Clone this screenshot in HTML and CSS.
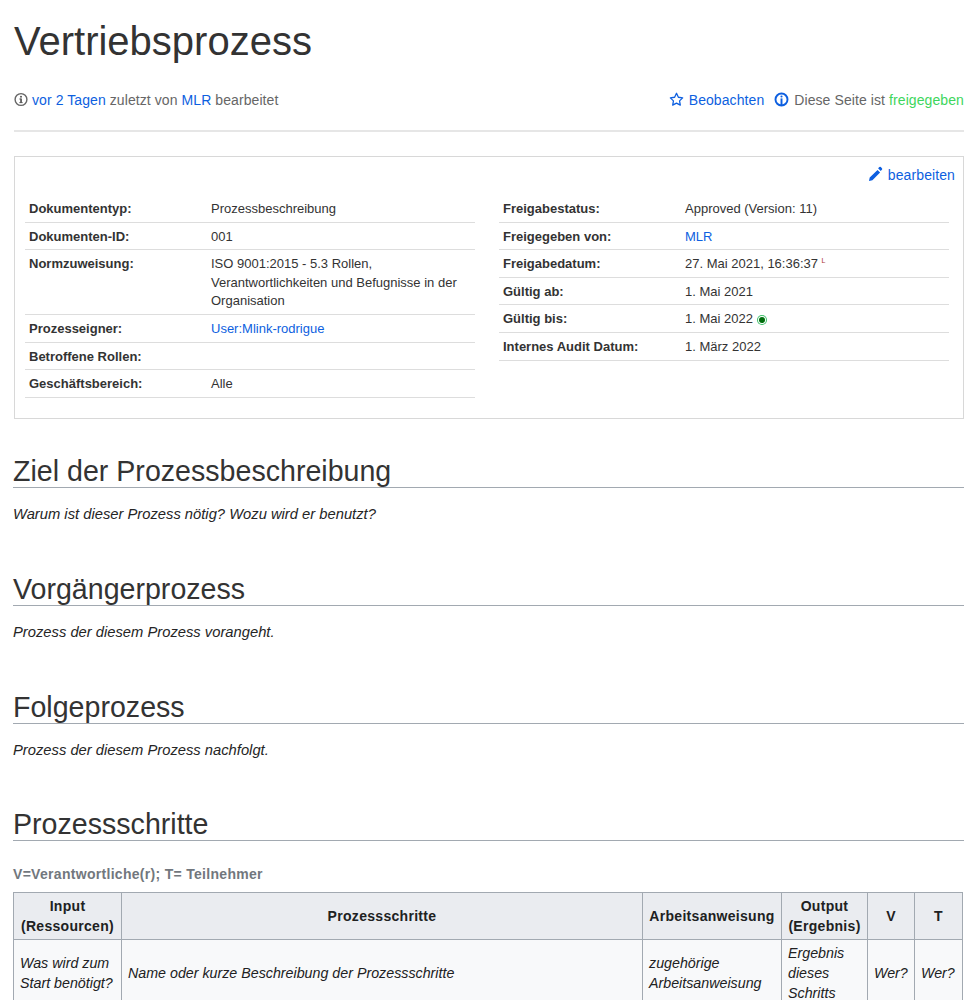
FILE: index.html
```html
<!DOCTYPE html>
<html lang="de">
<head>
<meta charset="utf-8">
<title>Vertriebsprozess</title>
<link rel="stylesheet" href="styles.css">
</head>
<body>
<main class="page">
  <h1 class="title">Vertriebsprozess</h1>
  <div class="meta">
    <div class="meta-left">
      <svg class="ico ico-info" viewBox="0 0 14 14"><circle cx="7" cy="7" r="5.9" fill="none" stroke="#666" stroke-width="1.4"/><rect x="6.2" y="6" width="1.7" height="4" fill="#555"/><rect x="5.4" y="9.6" width="3.2" height="1" fill="#555"/><rect x="5.4" y="6" width="1.5" height="1" fill="#555"/><circle cx="7" cy="4.2" r="1" fill="#555"/></svg>
      <a href="#">vor 2 Tagen</a> zuletzt von <a href="#">MLR</a> bearbeitet
    </div>
    <div class="meta-right">
      <a href="#" class="watch"><svg class="ico ico-wide" viewBox="0 0 14 14"><path d="M7 1.2l1.75 3.7 4 .55-2.9 2.8.7 4L7 10.35 3.45 12.25l.7-4-2.9-2.8 4-.55z" fill="none" stroke="#0d5fe0" stroke-width="1.2" stroke-linejoin="round"/></svg> Beobachten</a>
      <span class="status"><svg class="ico ico-wide" viewBox="0 0 14 14"><circle cx="7" cy="7" r="5.6" fill="none" stroke="#0d5fe0" stroke-width="1.8"/><rect x="6.1" y="6" width="1.8" height="7" fill="#0d5fe0"/><circle cx="7" cy="4.2" r="1" fill="#0d5fe0"/></svg> Diese Seite ist <span class="ok">freigegeben</span></span>
    </div>
  </div>
  <hr class="rule">
  <section class="infobox">
    <div class="edit"><a href="#"><svg class="pencil" viewBox="0 0 14 14"><path d="M10.6 1a1 1 0 0 1 1.4 0l1 1a1 1 0 0 1 0 1.4l-1.2 1.2-2.4-2.4zM8.9 3.7l1.4 1.4 1.0 1-7.2 7.1-3.2.7.7-3.2z" fill="#0d5fe0"/></svg> bearbeiten</a></div>
    <div class="columns">
      <table class="facts">
        <tr><th>Dokumententyp:</th><td>Prozessbeschreibung</td></tr>
        <tr><th>Dokumenten-ID:</th><td>001</td></tr>
        <tr><th>Normzuweisung:</th><td>ISO 9001:2015 - 5.3 Rollen, Verantwortlichkeiten und Befugnisse in der Organisation</td></tr>
        <tr><th>Prozesseigner:</th><td><a href="#">User:Mlink-rodrigue</a></td></tr>
        <tr><th>Betroffene Rollen:</th><td></td></tr>
        <tr><th>Geschäftsbereich:</th><td>Alle</td></tr>
      </table>
      <table class="facts">
        <tr><th>Freigabestatus:</th><td>Approved (Version: 11)</td></tr>
        <tr><th>Freigegeben von:</th><td><a href="#">MLR</a></td></tr>
        <tr><th>Freigabedatum:</th><td>27. Mai 2021, 16:36:37 <sup class="mark">L</sup></td></tr>
        <tr><th>Gültig ab:</th><td>1. Mai 2021</td></tr>
        <tr><th>Gültig bis:</th><td>1. Mai 2022 <span class="dot"></span></td></tr>
        <tr><th>Internes Audit Datum:</th><td>1. März 2022</td></tr>
      </table>
    </div>
  </section>
  <h2 class="heading">Ziel der Prozessbeschreibung</h2>
  <p class="hint">Warum ist dieser Prozess nötig? Wozu wird er benutzt?</p>
  <h2 class="heading">Vorgängerprozess</h2>
  <p class="hint">Prozess der diesem Prozess vorangeht.</p>
  <h2 class="heading">Folgeprozess</h2>
  <p class="hint">Prozess der diesem Prozess nachfolgt.</p>
  <h2 class="heading">Prozessschritte</h2>
  <p class="legend">V=Verantwortliche(r); T= Teilnehmer</p>
  <table class="steps">
    <colgroup><col class="c1"><col><col class="c3"><col class="c4"><col class="c5"><col class="c6"></colgroup>
    <tr><th>Input<br>(Ressourcen)</th><th>Prozessschritte</th><th>Arbeitsanweisung</th><th>Output<br>(Ergebnis)</th><th>V</th><th>T</th></tr>
    <tr><td>Was wird zum Start benötigt?</td><td>Name oder kurze Beschreibung der Prozessschritte</td><td>zugehörige Arbeitsanweisung</td><td>Ergebnis dieses Schritts</td><td>Wer?</td><td>Wer?</td></tr>
  </table>
</main>
</body>
</html>
```
FILE: styles.css
```css
html, body { margin: 0; padding: 0; background: #fff; }
html { height: 1000px; overflow: hidden; }
body { font-family: "Liberation Sans", Arial, sans-serif; font-size: 14px; color: #252525; height: 1000px; overflow: hidden; }
a { color: #0d5fe0; text-decoration: none; }
.page { padding: 0 14px 0 13px; }
.title { margin: 0 0 0 1px; padding-top: 16px; font-size: 40px; line-height: 50px; font-weight: 400; color: #333; }
.meta { display: flex; justify-content: space-between; margin: 0 0 0 1px; padding-top: 26px; height: 22px; line-height: 16px; color: #666; letter-spacing: .08px; }
.meta-right { display: flex; gap: 10px; }
.status { letter-spacing: .09px; }
.ok { color: #3dd65c; }
.ico { width: 15px; height: 15px; vertical-align: -2px; }
.ico-info { width: 14px; }
.ico-wide { margin-right: 1px; }
.rule { margin: 16px 0 0 1px; border: 0; height: 2px; background: #e6e6e6; }
.infobox { box-sizing: border-box; margin: 24px 0 0 1px; border: 1px solid #d8d8d8; height: 263px; padding: 9px 14px 0 10px; font-size: 13px; }
.edit { text-align: right; font-size: 14px; line-height: 16px; margin-right: -6px; height: 29px; letter-spacing: .1px; }
.pencil { width: 15px; height: 15px; vertical-align: -1px; margin-right: 1px; }
.columns { display: flex; gap: 24px; }
.facts { flex: 1 1 0; width: 450px; border-collapse: collapse; align-self: flex-start; }
.facts th, .facts td { border-bottom: 1px solid #ddd; padding: 5px 4px 3px; text-align: left; vertical-align: top; line-height: 18.6px; font-size: 13px; font-weight: 400; color: #333; }
.facts a { color: #0d5fe0; }
.facts th { width: 174px; font-weight: 700; }
.mark { font-size: 7px; color: #a33; line-height: 0; }
.dot { display: inline-block; width: 6px; height: 6px; border-radius: 50%; background: #006d0c; box-shadow: 0 0 0 1px #fff, 0 0 0 2px #3cc06a; margin: 0 2px; }
.heading { margin: 0; font-size: 28.6px; line-height: 32px; font-weight: 400; color: #333; border-bottom: 1px solid #a2a9b1; padding-top: 36px; }
.hint { margin: 0; font-style: italic; font-size: 14.75px; line-height: 20px; height: 32.8px; padding-top: 16px; color: #252525; }
.legend { margin: 0; font-weight: 700; font-size: 14px; line-height: 20px; padding-top: 23px; color: #72777d; letter-spacing: .3px; }
.steps { margin-top: 8px; width: 950px; table-layout: fixed; border-collapse: collapse; background: #f8f9fa; color: #202122; }
.steps th, .steps td { border: 1px solid #a2a9b1; padding: 3px 5px; line-height: 20px; font-size: 14px; }
.steps th { background: #eaecf0; text-align: center; letter-spacing: .3px; }
.steps td { font-style: italic; text-align: left; font-size: 14.25px; padding-left: 6px; }
.c1 { width: 108px; }
.c3 { width: 139px; }
.c4 { width: 86px; }
.c5 { width: 47px; }
.c6 { width: 48px; }
```
